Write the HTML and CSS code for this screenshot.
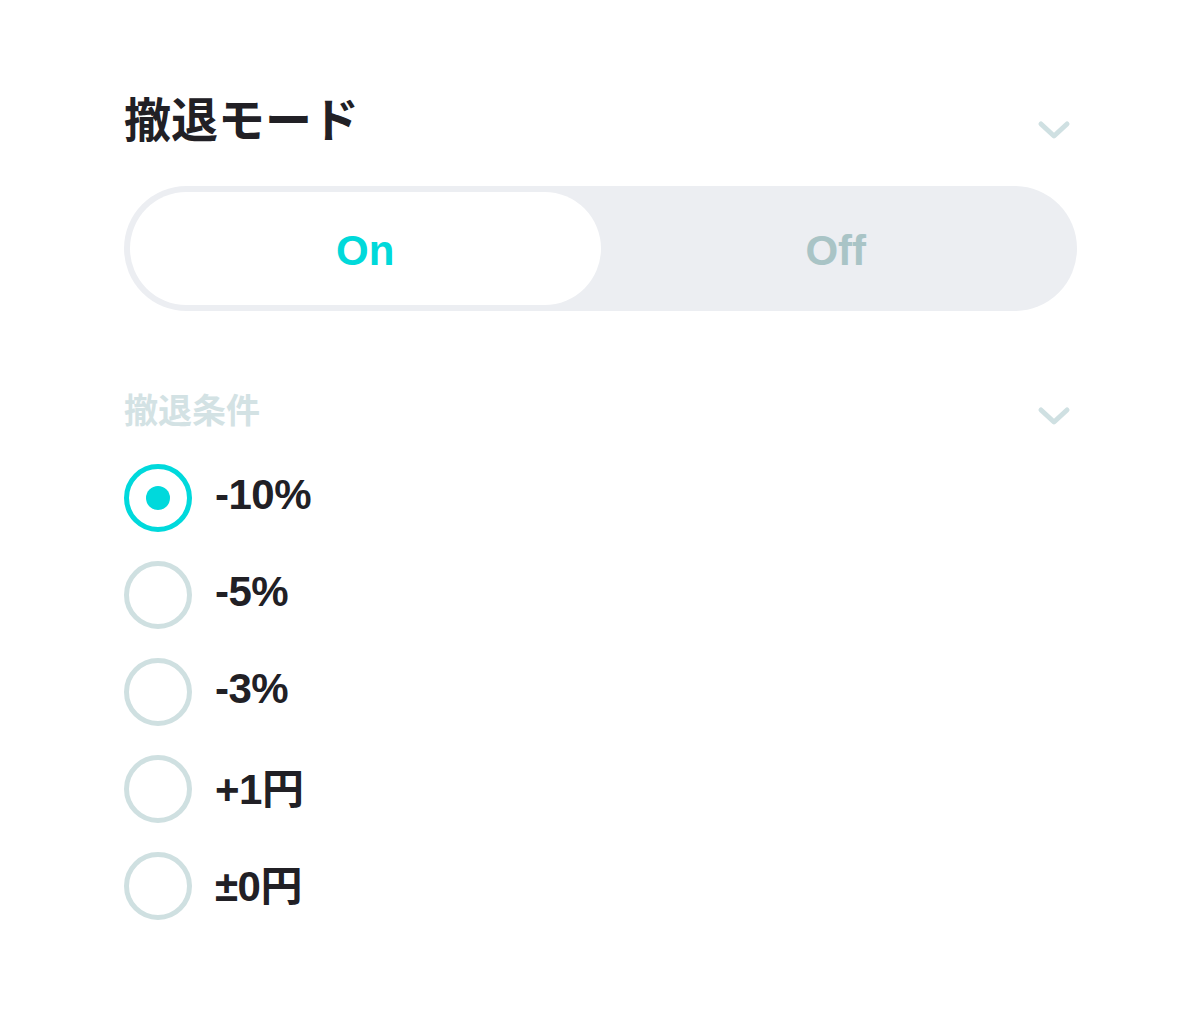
FILE: index.html
```html
<!DOCTYPE html>
<html lang="ja">

<head>
    <meta charset="UTF-8" />
    <meta name="viewport" content="width=device-width, initial-scale=1.0" />
    <title>撤退モード</title>
    <link rel="stylesheet" href="styles.css">
</head>

<body>

    <div class="panel">
        <div class="header">
            <h1 class="title">撤退モード</h1>
            <svg class="chevron" width="34" height="22" viewBox="0 0 34 22">
                <path d="M4 5 L17 17 L30 5" />
            </svg>
        </div>

        <div class="toggle">
            <button class="toggle-btn active">On</button>
            <button class="toggle-btn">Off</button>
        </div>

        <div class="sub-header">
            <h2 class="sub-title">撤退条件</h2>
            <svg class="chevron" width="34" height="22" viewBox="0 0 34 22">
                <path d="M4 5 L17 17 L30 5" />
            </svg>
        </div>

        <ul class="options">
            <li class="option selected"><span class="radio"></span><span class="label">-10%</span></li>
            <li class="option"><span class="radio"></span><span class="label">-5%</span></li>
            <li class="option"><span class="radio"></span><span class="label">-3%</span></li>
            <li class="option"><span class="radio"></span><span class="label">+1円</span></li>
            <li class="option"><span class="radio"></span><span class="label">±0円</span></li>
        </ul>
    </div>

</body>

</html>
```

FILE: styles.css
```css
body {
    margin: 0;
    padding: 0;
    background: #fff;
    font-family: "Liberation Sans", "Noto Sans CJK JP", sans-serif;
    color: #212025;
}

.panel {
    width: 953px;
    margin-left: 124px;
    padding-top: 87px;
}

.header {
    display: flex;
    justify-content: space-between;
    align-items: center;
    height: 60px;
}

.title {
    margin: 0;
    font-family: "Noto Sans CJK JP", sans-serif;
    font-size: 47px;
    font-weight: 700;
    line-height: 60px;
    color: #212025;
}

.chevron {
    margin-right: 6px;
    margin-top: 26px;
    fill: none;
    stroke: #cfe0e2;
    stroke-width: 5;
    stroke-linecap: round;
    stroke-linejoin: round;
}

.toggle {
    display: flex;
    margin-top: 39px;
    height: 125px;
    padding: 6px;
    box-sizing: border-box;
    background: #eceef2;
    border-radius: 63px;
}

.toggle-btn {
    flex: 1;
    border: none;
    background: transparent;
    border-radius: 57px;
    font-family: "Liberation Sans", sans-serif;
    font-size: 42px;
    font-weight: 700;
    color: #a9c4c6;
    padding: 4px 0 0;
    cursor: pointer;
}

.toggle-btn.active {
    background: #fff;
    color: #00d9da;
}

.sub-header {
    display: flex;
    justify-content: space-between;
    align-items: center;
    margin-top: 78px;
    height: 40px;
}

.sub-title {
    margin: 0;
    font-family: "Noto Sans CJK JP", sans-serif;
    font-size: 34px;
    font-weight: 700;
    line-height: 40px;
    color: #d3e2e4;
}

.sub-header .chevron {
    margin-top: 14px;
}

.options {
    list-style: none;
    margin: 20px 0 0;
    padding: 0;
}

.option {
    display: flex;
    align-items: center;
    height: 97px;
    gap: 23px;
}

.radio {
    width: 68px;
    height: 68px;
    box-sizing: border-box;
    border: 5px solid #cfe0e1;
    border-radius: 50%;
    display: flex;
    justify-content: center;
    align-items: center;
}

.selected .radio {
    border-color: #00d9dc;
}

.selected .radio::after {
    content: "";
    width: 24px;
    height: 24px;
    border-radius: 50%;
    background: #00d9dc;
}

.label {
    font-size: 42px;
    font-weight: 700;
    color: #212025;
    letter-spacing: -0.5px;
    padding-bottom: 6px;
}
```
